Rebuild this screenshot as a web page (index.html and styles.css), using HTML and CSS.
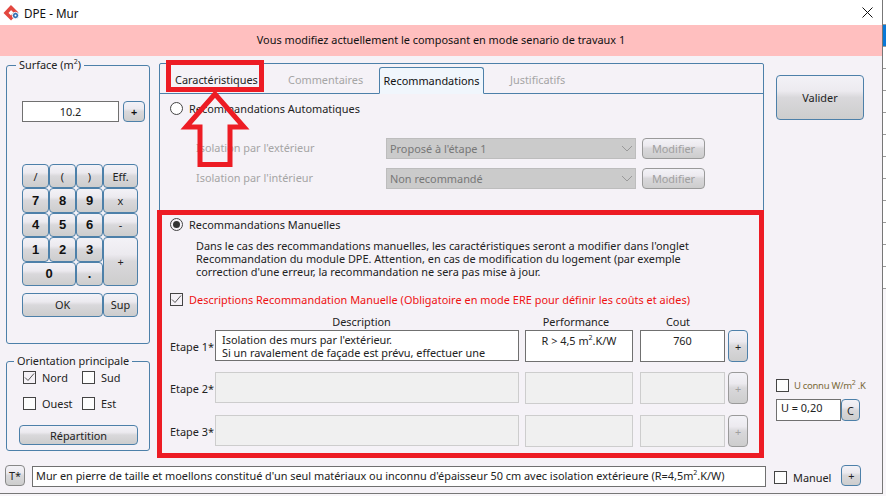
FILE: index.html
```html
<!DOCTYPE html>
<html lang="fr">
<head>
  <meta charset="UTF-8" />
  <title>DPE - Mur</title>
  <link rel="stylesheet" href="styles.css">
</head>
<body>

  <div class="window">
    <div class="titlebar">
      <svg class="logo" width="18" height="18" viewBox="0 0 18 18">
        <path d="M9 3.5 L14 8.5 L9 14 L4 9 Z" fill="none" stroke="#e2473f" stroke-width="3.6"/>
        <circle cx="13.5" cy="11.5" r="3.2" fill="#2f6fb3" stroke="#fff" stroke-width="1"/>
        <circle cx="13.5" cy="11.5" r="1" fill="#fff"/>
      </svg>
      <span class="title">DPE - Mur</span>
      <svg class="close" width="11" height="11" viewBox="0 0 11 11">
        <path d="M0.5 0.5 L10.5 10.5 M10.5 0.5 L0.5 10.5" stroke="#111" stroke-width="1" fill="none"/>
      </svg>
    </div>
    <div class="banner">Vous modifiez actuellement le composant en mode senario de travaux 1</div>

    <div class="main">
      <div class="upper">
        <div class="left">
          <fieldset class="group surface">
            <legend>Surface (m<sup>2</sup>)</legend>
            <div class="surface-row">
              <div class="field surface-input">10.2</div>
              <button class="btn plus-btn"><b>+</b></button>
            </div>
            <div class="keypad">
              <button class="btn">/</button>
              <button class="btn">(</button>
              <button class="btn">)</button>
              <button class="btn">Eff.</button>
              <button class="btn num">7</button>
              <button class="btn num">8</button>
              <button class="btn num">9</button>
              <button class="btn">x</button>
              <button class="btn num">4</button>
              <button class="btn num">5</button>
              <button class="btn num">6</button>
              <button class="btn">-</button>
              <button class="btn num">1</button>
              <button class="btn num">2</button>
              <button class="btn num">3</button>
              <button class="btn key-plus">+</button>
              <button class="btn num key-zero">0</button>
              <button class="btn num">.</button>
            </div>
            <div class="ok-row">
              <button class="btn ok">OK</button>
              <button class="btn sup">Sup</button>
            </div>
          </fieldset>

          <fieldset class="group orientation">
            <legend>Orientation principale</legend>
            <div class="checks">
              <label class="check"><span class="box on"><svg width="11" height="11" viewBox="0 0 11 11"><path d="M1 5.5 L4 8.5 L10 1.5" fill="none" stroke="#555" stroke-width="1"/></svg></span>Nord</label>
              <label class="check"><span class="box"></span>Sud</label>
              <label class="check"><span class="box"></span>Ouest</label>
              <label class="check"><span class="box"></span>Est</label>
            </div>
            <button class="btn repartition">Répartition</button>
          </fieldset>
        </div>

        <div class="panel">
          <div class="tabs">
            <span class="tab tab-carac">Caractéristiques</span>
            <span class="tab tab-off tab-comm">Commentaires</span>
            <span class="tab tab-active">Recommandations</span>
            <span class="tab tab-off tab-just">Justificatifs</span>
          </div>

          <div class="auto">
            <div class="radio-row"><span class="radio"></span>Recommandations Automatiques</div>
            <div class="auto-row first">
              <span class="auto-label">Isolation par l'extérieur</span>
              <div class="combo">Proposé à l'étape 1<svg width="12" height="7" viewBox="0 0 12 7"><path d="M1 1 L6 6 L11 1" fill="none" stroke="#999" stroke-width="1"/></svg></div>
              <button class="btn btn-off modifier">Modifier</button>
            </div>
            <div class="auto-row">
              <span class="auto-label">Isolation par l'intérieur</span>
              <div class="combo">Non recommandé<svg width="12" height="7" viewBox="0 0 12 7"><path d="M1 1 L6 6 L11 1" fill="none" stroke="#999" stroke-width="1"/></svg></div>
              <button class="btn btn-off modifier">Modifier</button>
            </div>
          </div>

          <div class="manual">
            <div class="radio-row"><span class="radio on"></span>Recommandations Manuelles</div>
            <p class="note">Dans le cas des recommandations manuelles, les caractéristiques seront a modifier dans l'onglet<br>Recommandation du module DPE. Attention, en cas de modification du logement (par exemple<br>correction d'une erreur, la recommandation ne sera pas mise à jour.</p>
            <label class="check red-check"><span class="box on"><svg width="11" height="11" viewBox="0 0 11 11"><path d="M1 5.5 L4 8.5 L10 1.5" fill="none" stroke="#555" stroke-width="1"/></svg></span>Descriptions Recommandation Manuelle (Obligatoire en mode ERE pour définir les coûts et aides)</label>

            <div class="steps">
              <span></span>
              <span class="head head-desc">Description</span>
              <span class="head head-perf">Performance</span>
              <span class="head head-cout">Cout</span>
              <span></span>

              <span class="step-label">Etape 1*</span>
              <div class="field desc desc-text">Isolation des murs par l'extérieur.<br>Si un ravalement de façade est prévu, effectuer une</div>
              <div class="field perf">R &gt; 4,5 m<sup>2</sup>.K/W</div>
              <div class="field cout">760</div>
              <button class="btn step-btn">+</button>

              <span class="step-label">Etape 2*</span>
              <div class="field desc field-off"></div>
              <div class="field perf field-off"></div>
              <div class="field cout field-off"></div>
              <button class="btn btn-off step-btn">+</button>

              <span class="step-label">Etape 3*</span>
              <div class="field desc field-off"></div>
              <div class="field perf field-off"></div>
              <div class="field cout field-off"></div>
              <button class="btn btn-off step-btn">+</button>
            </div>
          </div>
        </div>

        <div class="right">
          <button class="btn valider">Valider</button>
          <label class="check u-check"><span class="box"></span><span>U connu W/m<sup>2</sup> .K</span></label>
          <div class="u-row">
            <div class="field u-input">U = 0,20</div>
            <button class="btn u-btn">C</button>
          </div>
        </div>
      </div>

      <div class="bottom">
        <button class="btn t-btn">T*</button>
        <div class="field summary">Mur en pierre de taille et moellons constitué d'un seul matériaux ou inconnu d'épaisseur 50 cm avec isolation extérieure (R=4,5m<sup>2</sup>.K/W)</div>
        <label class="check manuel"><span class="box"></span>Manuel</label>
        <button class="btn bottom-plus">+</button>
      </div>
    </div>
  </div>
  <div class="strip"></div>

  <!-- red annotations drawn over the screenshot -->
  <div class="mark-tab"></div>
  <div class="mark-manual"></div>
  <svg class="mark-arrow" width="80" height="84" viewBox="0 0 80 84">
    <path d="M40 4 L11 37 L25 37 L25 74.5 L55 74.5 L55 37 L69 37 Z" fill="none" stroke="#ed1c24" stroke-width="5"/>
  </svg>

</body>
</html>
```

FILE: styles.css
```css
html, body {
  margin: 0;
  height: 496px;
  overflow: hidden;
}

body {
  position: relative;
  display: flex;
  background: #f8f6f9;
  font-family: 'Noto Sans', sans-serif;
  font-size: 10.9px;
  color: #222;
}

sup {
  font-size: 7px;
  line-height: 0;
}

.window {
  width: 882px;
  height: 493px;
  border-right: 1px solid #777;
  border-bottom: 1px solid #777;
  background: #f5f2f7;
  display: flex;
  flex-direction: column;
}

.strip {
  width: 3px;
  height: 289px;
  background:
    linear-gradient(#0a78d7, #0a78d7) 0 25px / 3px 21px no-repeat,
    repeating-linear-gradient(#fff 0, #fff 21px, #9a9a9a 21px, #9a9a9a 22px) 0 3px;
}

.titlebar {
  height: 25px;
  background: #fff;
  display: flex;
  align-items: center;
  padding-left: 2px;
}

.logo { margin-right: 4px; }

.title {
  font-size: 11.7px;
  color: #111;
}

.close { margin-left: auto; margin-right: 9px; }

.banner {
  height: 31px;
  line-height: 30px;
  background: #ffbfbf;
  text-align: center;
  color: #111;
}

.main {
  flex: 1;
  display: flex;
  flex-direction: column;
}

.upper {
  display: flex;
  height: 409px;
}

.left {
  width: 144px;
  margin-left: 6px;
  margin-top: 2px;
}

.group {
  margin: 0;
  padding: 0;
  border: 1px solid #4d80a9;
  border-radius: 3px;
  box-sizing: border-box;
  width: 144px;
}

.group legend {
  margin-left: 9px;
  padding: 0 3px;
  color: #222;
  line-height: 14px;
}

.orientation legend { margin-left: 7px; }

.surface { height: 286px; }

.surface-row {
  display: flex;
  margin: 29px 0 0 15px;
  gap: 4px;
}

.field {
  box-sizing: border-box;
  background: #fff;
  border: 1px solid #707070;
  color: #222;
}

.surface-input {
  width: 97px;
  height: 21px;
  line-height: 19px;
  text-align: center;
}

.btn {
  box-sizing: border-box;
  padding: 0;
  border: 1px solid #4d80a9;
  border-radius: 4px;
  background: linear-gradient(#f3f2f7 0, #eceaef 35%, #d9d8db 50%, #cdcdcd 100%);
  font-family: inherit;
  font-size: 10.9px;
  color: #222;
}

.plus-btn {
  width: 22px;
  height: 21px;
  color: #111;
}

.keypad {
  display: grid;
  grid-template-columns: 27px 27px 27px 35px;
  grid-template-rows: repeat(5, 24.4px);
  margin: 42px 0 0 15px;
}

.num {
  font-family: 'Liberation Sans', sans-serif;
  font-size: 13px;
  font-weight: bold;
  color: #111;
}

.key-plus { grid-row: span 2; }
.key-zero { grid-column: span 2; }

.ok-row {
  display: flex;
  margin: 7px 0 0 15px;
}

.ok { width: 81px; height: 24px; }
.sup { width: 35px; height: 24px; }

.orientation {
  height: 97px;
  margin-top: 10px;
}

.checks {
  display: grid;
  grid-template-columns: 59px 50px;
  grid-auto-rows: 26px;
  margin: 2px 0 0 16px;
}

.check {
  display: flex;
  align-items: center;
  gap: 6px;
  height: 14px;
  color: #222;
  white-space: nowrap;
}

.box {
  box-sizing: border-box;
  width: 13px;
  height: 13px;
  flex: none;
  border: 1px solid #444;
  background: #fdfdfd;
  display: flex;
  align-items: center;
  justify-content: center;
}

.box.on { background: #f5f2f7; }

.repartition {
  display: block;
  width: 119px;
  height: 20px;
  margin: 3px 0 0 12px;
}

.panel {
  box-sizing: border-box;
  width: 605px;
  height: 393px;
  margin: 7px 0 0 9px;
  border: 1px solid #4d80a9;
  border-radius: 2px 2px 0 0;
}

.tabs {
  height: 29px;
  border-bottom: 1px solid #4d80a9;
  display: flex;
  align-items: flex-end;
}

.tab {
  height: 26px;
  line-height: 25px;
  color: #222;
}

.tab-carac { margin-left: 15px; width: 113px; }
.tab-comm { width: 91px; }
.tab-off { color: #a5a5a5; }
.tab-just { margin-left: 26px; }

.tab-active {
  box-sizing: border-box;
  width: 105px;
  margin-bottom: -1px;
  height: 27px;
  text-align: center;
  border: 1px solid #4d80a9;
  border-bottom: 1px solid #f0f6fc;
  border-radius: 3px 3px 0 0;
  background: #f0f6fc;
  color: #111;
}

.auto { padding: 7px 0 0 10px; }

.radio-row {
  display: flex;
  align-items: center;
  gap: 6px;
  height: 14px;
  color: #222;
}

.radio {
  box-sizing: border-box;
  width: 13px;
  height: 13px;
  border: 1px solid #444;
  border-radius: 50%;
  background: #fff;
  display: flex;
  align-items: center;
  justify-content: center;
}

.radio.on { background: #f5f2f7; }

.radio.on::after {
  content: "";
  width: 7px;
  height: 7px;
  border-radius: 50%;
  background: #333;
}

.auto-row {
  display: flex;
  align-items: center;
  height: 21px;
  margin-top: 9px;
  margin-left: 26px;
  color: #a5a5a5;
}

.auto-row.first { margin-top: 23px; }

.auto-label {
  width: 190px;
  padding-bottom: 2px;
}

.combo {
  box-sizing: border-box;
  width: 250px;
  height: 21px;
  line-height: 20px;
  padding-left: 3px;
  border: 1px solid #bdbdbd;
  background: #cbcbcb;
  color: #777;
  display: flex;
  align-items: center;
  justify-content: space-between;
}

.combo svg { margin-right: 2px; }

.btn-off {
  border-color: #9a9a9a;
  color: #a0a0a0;
}

.modifier {
  width: 63px;
  height: 21px;
  margin-left: 6px;
}

.manual { padding: 28px 0 0 10px; }

.note {
  margin: 8px 0 0 26px;
  line-height: 13px;
  color: #222;
}

.red-check {
  margin-top: 14px;
  color: #ee1111;
  letter-spacing: 0.03px;
}

.steps {
  display: grid;
  grid-template-columns: 45px 304px 114px 92px 23px;
  grid-template-rows: 16px 42px 43px 32px;
  margin-top: 8px;
  align-items: start;
}

.head {
  text-align: center;
  justify-self: stretch;
  color: #222;
}

.head-desc { padding-right: 11px; }
.head-cout { padding-right: 2px; }

.step-label {
  line-height: 34px;
  color: #222;
  white-space: nowrap;
}

.desc { width: 304px; height: 31px; }
.perf, .cout { height: 32px; justify-self: end; text-align: center; padding-top: 2px; line-height: 15px; }
.perf { width: 108px; }
.cout { width: 85px; }

.desc-text {
  padding: 2px 0 0 6px;
  line-height: 13px;
  overflow: hidden;
}

.field-off {
  background: #f0f0f0;
  border-color: #cdcdcd;
}

.step-btn {
  width: 20px;
  height: 32px;
  justify-self: end;
}

.right {
  margin-left: 12px;
  width: 90px;
}

.valider {
  display: block;
  width: 88px;
  height: 45px;
  margin-top: 19px;
}

.u-check {
  margin-top: 258px;
  gap: 5px;
  font-size: 9.5px;
  letter-spacing: -0.3px;
  color: #7a6a3a;
}

.u-row {
  display: flex;
  margin-top: 7px;
}

.u-input {
  width: 65px;
  height: 22px;
  padding-left: 4px;
  line-height: 16px;
}

.u-btn {
  width: 19px;
  height: 22px;
}

.bottom {
  display: flex;
  align-items: flex-start;
}

.t-btn {
  width: 20px;
  height: 21px;
  margin-left: 5px;
  border-color: #888;
}

.summary {
  width: 734px;
  height: 21px;
  margin: 1px 0 0 7px;
  padding-left: 3px;
  line-height: 17px;
  white-space: nowrap;
}

.manuel {
  margin: 5px 0 0 8px;
}

.bottom-plus {
  width: 20px;
  height: 21px;
  margin-left: 10px;
}

/* annotations */
.mark-tab {
  position: absolute;
  left: 166px;
  top: 60px;
  width: 98px;
  height: 32px;
  box-sizing: border-box;
  border: 5px solid #ed1c24;
}

.mark-manual {
  position: absolute;
  left: 157px;
  top: 210px;
  width: 607px;
  height: 248px;
  box-sizing: border-box;
  border: 5px solid #ed1c24;
}

.mark-arrow {
  position: absolute;
  left: 175px;
  top: 90px;
}
```
